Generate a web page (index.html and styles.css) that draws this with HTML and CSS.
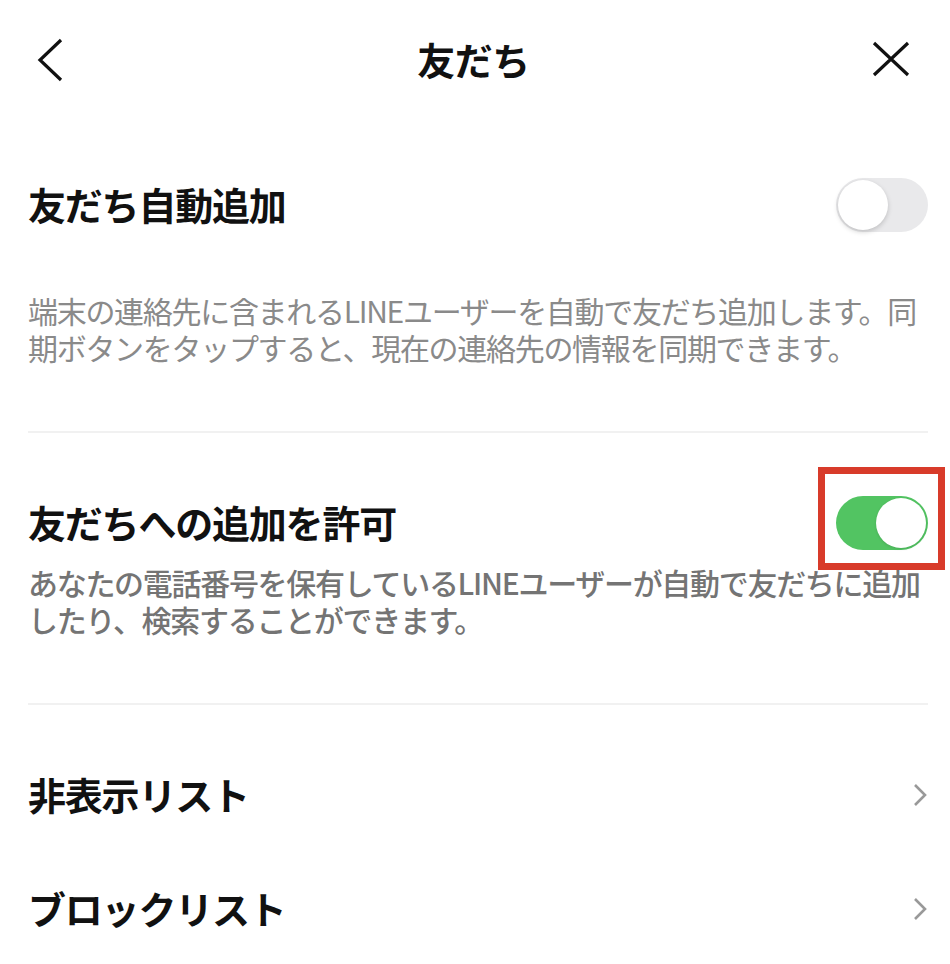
FILE: index.html
```html
<!DOCTYPE html>
<html lang="ja">
<head>
    <meta charset="UTF-8">
    <meta name="viewport" content="width=device-width, initial-scale=1.0">
    <title>友だち</title>
    <link rel="stylesheet" href="styles.css">
</head>
<body>
    <header class="header">
        <button class="icon-btn back" aria-label="戻る">
            <svg width="26" height="44" viewBox="0 0 26 44"><path d="M24 2 L3 22 L24 42" fill="none" stroke="#111" stroke-width="3.2"/></svg>
        </button>
        <h1 class="title">友だち</h1>
        <button class="icon-btn close" aria-label="閉じる">
            <svg width="38" height="36" viewBox="0 0 38 36"><path d="M2 2 L36 34 M36 2 L2 34" fill="none" stroke="#111" stroke-width="3.2"/></svg>
        </button>
    </header>

    <main class="settings">
        <section class="block first">
            <div class="row">
                <span class="row-label">友だち自動追加</span>
                <span class="toggle"><span class="knob"></span></span>
            </div>
            <p class="desc light">端末の連絡先に含まれるLINEユーザーを自動で友だち追加します。同<br>期ボタンをタップすると、現在の連絡先の情報を同期できます。</p>
        </section>

        <section class="block">
            <div class="row">
                <span class="row-label">友だちへの追加を許可</span>
                <span class="toggle on"><span class="knob"></span><span class="highlight"></span></span>
            </div>
            <p class="desc strong">あなたの電話番号を保有しているLINEユーザーが自動で友だちに追加<br>したり、検索することができます。</p>
        </section>

        <section class="block links">
            <div class="row link">
                <span class="row-label">非表示リスト</span>
                <svg class="chevron" width="14" height="24" viewBox="0 0 14 24"><path d="M2 2 L12 12 L2 22" fill="none" stroke="#999" stroke-width="2.6"/></svg>
            </div>
            <div class="row link">
                <span class="row-label">ブロックリスト</span>
                <svg class="chevron" width="14" height="24" viewBox="0 0 14 24"><path d="M2 2 L12 12 L2 22" fill="none" stroke="#999" stroke-width="2.6"/></svg>
            </div>
        </section>
    </main>
</body>
</html>
```

FILE: styles.css
```css
body {
    margin: 0;
    background-color: #fff;
    color: #111;
    font-family: "Noto Sans CJK JP", "Noto Sans", sans-serif;
}
.header {
    height: 120px;
    display: grid;
    grid-template-columns: 1fr auto 1fr;
    align-items: center;
    padding: 0 40px 0 37px;
}
.icon-btn {
    background: none;
    border: none;
    padding: 0;
    display: flex;
}
.back {
    margin-top: -1px;
    justify-self: start;
}
.close {
    margin-top: -2px;
    justify-self: end;
}
.title {
    margin: 0;
    font-size: 38px;
    font-weight: 700;
    letter-spacing: -0.5px;
    line-height: 50px;
    margin-top: -2px;
}
.settings {
    padding: 0 22px 0 28px;
}
.block {
    border-bottom: 2px solid #f1f1f1;
    padding: 63px 0 65px;
}
.block.first {
    padding-top: 58px;
}
.block.links {
    border-bottom: none;
    padding-top: 63px;
}
.row {
    display: flex;
    align-items: center;
    justify-content: space-between;
    height: 54px;
}
.row-label {
    font-size: 38px;
    font-weight: 700;
    letter-spacing: -1.2px;
    margin-top: -4px;
}
.link + .link {
    margin-top: 60px;
}
.chevron {
    margin-right: 1px;
}
.desc {
    margin: 60px 0 0;
    font-size: 30px;
    line-height: 37px;
    letter-spacing: -1.3px;
    white-space: nowrap;
}
.desc.light {
    color: #8a8a8a;
    font-weight: 400;
}
.desc.strong {
    color: #747474;
    font-weight: 500;
    margin-top: 14px;
}
.toggle {
    position: relative;
    width: 92px;
    height: 54px;
    border-radius: 27px;
    background-color: #e9e9eb;
    flex-shrink: 0;
}
.toggle .knob {
    position: absolute;
    top: 2px;
    left: 2px;
    width: 50px;
    height: 50px;
    border-radius: 50%;
    background-color: #fff;
    box-shadow: 0 2px 5px rgba(0, 0, 0, 0.18);
}
.toggle.on {
    background-color: #52c462;
}
.toggle.on .knob {
    left: 40px;
    box-shadow: 0 1px 3px rgba(0, 0, 0, 0.12);
}
.highlight {
    position: absolute;
    top: -29px;
    left: -18px;
    width: 113px;
    height: 89px;
    border: 7px solid #d83b2a;
}
```
